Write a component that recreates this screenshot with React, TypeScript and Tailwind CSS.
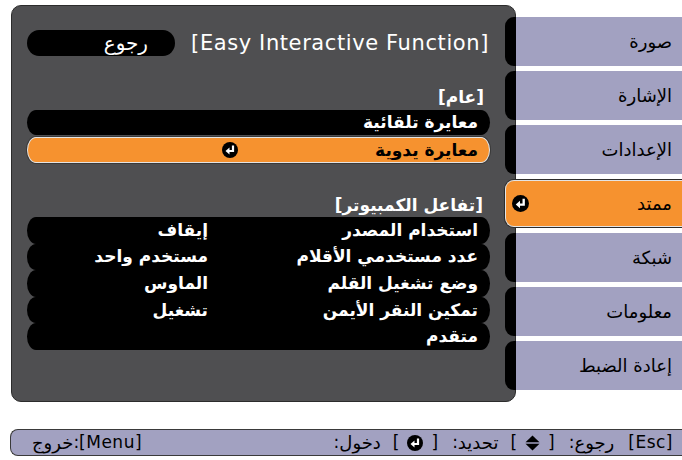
import React from "react";

const EnterIcon = ({ size = 16 }: { size?: number }) => (
  <svg width={size} height={size} viewBox="0 0 16 16" className="shrink-0">
    <circle cx="8" cy="8" r="8" fill="#000" />
    <path d="M11 3.5V9H6.5" stroke="#fff" strokeWidth="2.2" fill="none" />
    <path d="M7.5 5.5L3.5 9L7.5 12.5z" fill="#fff" />
  </svg>
);

const UpDownIcon = () => (
  <svg width="15" height="16" viewBox="0 0 15 16" className="shrink-0">
    <path d="M7.5 0.5L14.5 7.3H0.5z" fill="#000" />
    <path d="M0.5 8.7H14.5L7.5 15.5z" fill="#000" />
  </svg>
);

const rows: [string, string][] = [
  ["استخدام المصدر", "إيقاف"],
  ["عدد مستخدمي الأقلام", "مستخدم واحد"],
  ["وضع تشغيل القلم", "الماوس"],
  ["تمكين النقر الأيمن", "تشغيل"],
  ["متقدم", ""],
];

const tabs = ["صورة", "الإشارة", "الإعدادات", "ممتد", "شبكة", "معلومات", "إعادة الضبط"];

export default function App() {
  return (
    <div className="w-[682px] h-[460px] bg-white overflow-hidden font-['DejaVu_Sans','Liberation_Sans',sans-serif]">
      <div className="flex pt-[5px] pl-[11px] h-[402px]">
        {/* Main panel */}
        <div className="w-[505px] h-[397px] shrink-0 bg-[#4f4f51] rounded-[10px] border border-[#2c2c2c] flex flex-col pl-[15px] pr-[25px] pt-[24px]">
          {/* Header */}
          <div className="h-[26px] flex items-center justify-between">
            <div className="w-[148px] h-[26px] bg-black rounded-[12px/13px] flex items-center justify-end pr-[27px]">
              <span dir="rtl" className="text-white text-[20px] leading-none tracking-[3px]">رجوع</span>
            </div>
            <span className="text-white text-[21px] leading-none pr-[1px] tracking-[0.6px]">[Easy Interactive Function]</span>
          </div>

          <div className="h-[20px] mt-[31px] flex items-center justify-end pr-[6px]">
            <span dir="rtl" className="text-white text-[17px] font-bold leading-none">[عام]</span>
          </div>

          <div className="h-[25px] mt-[3px] bg-black rounded-[9px/12.5px] flex items-center justify-end pr-[12px]">
            <span dir="rtl" className="text-white text-[17px] font-bold leading-none">معايرة تلقائية</span>
          </div>

          <div className="h-[26px] mt-[2px] bg-[#f6922f] rounded-[9px/13px] border border-[#e4e4e4] shadow-[0_0_0_1px_#3a3a3a] flex items-center">
            <div className="w-[210px] flex justify-end">
              <EnterIcon />
            </div>
            <div className="flex-1 flex justify-end pr-[11px]">
              <span dir="rtl" className="text-black text-[17px] font-bold leading-none">معايرة يدوية</span>
            </div>
          </div>

          <div className="h-[20px] mt-[32px] flex items-center justify-end pr-[7px]">
            <span dir="rtl" className="text-white text-[17px] font-bold leading-none">[تفاعل الكمبيوتر]</span>
          </div>

          <div className="mt-[2px] flex flex-col">
            {rows.map(([label, value], i) => (
              <div key={i} className="h-[26.6px] bg-black rounded-[9px/13.3px] flex items-center">
                <div className="w-[181px] flex justify-end">
                  <span dir="rtl" className="text-white text-[17px] font-bold leading-none">{value}</span>
                </div>
                <div className="flex-1 flex justify-end pr-[12px]">
                  <span dir="rtl" className="text-white text-[17px] font-bold leading-none">{label}</span>
                </div>
              </div>
            ))}
          </div>
        </div>

        {/* Tabs */}
        <div className="ml-[-11px] w-[177px] shrink-0 pt-[12px] flex flex-col gap-[5px]">
          {tabs.map((t, i) =>
            i === 3 ? (
              <div key={i} className="h-[49px] py-[1px]">
                <div className="h-full bg-[#f6922f] rounded-l-[9px] border border-[#e4e4e4] border-r-0 shadow-[0_0_0_1px_#2c2c2c] flex items-center justify-between pl-[6px] pr-[10px]">
                  <EnterIcon size={17} />
                  <span dir="rtl" className="text-black text-[18px] leading-none">{t}</span>
                </div>
              </div>
            ) : (
              <div key={i} className="h-[49px] flex">
                <div className="w-[11px] bg-black rounded-l-[9px]" />
                <div className="flex-1 bg-[#a2a1c1] flex items-center justify-end pr-[10px]">
                  <span dir="rtl" className="text-black text-[18px] leading-none">{t}</span>
                </div>
              </div>
            )
          )}
        </div>
      </div>

      {/* Bottom bar */}
      <div className="mt-[27px] ml-[10px] h-[27px] bg-[#a2a1c1] border border-[#3a3a3a] border-r-0 rounded-l-[8px] flex items-center justify-between pl-[21px] pr-[9px] text-black text-[17px] leading-none">
        <div className="flex items-center">
          <span dir="rtl" className="text-[18px] tracking-[3px]">خروج</span>
          <span>:</span>
          <span className="tracking-[0.5px]">[Menu]</span>
        </div>
        <div className="flex items-center">
          <span>:</span>
          <span dir="rtl" className="text-[18px] tracking-[2px]">دخول</span>
          <span className="ml-[12px]">[</span>
          <span className="mx-[8px] flex"><EnterIcon size={16} /></span>
          <span>]</span>
          <span className="ml-[14px]">:</span>
          <span dir="rtl" className="text-[18px] tracking-[2px]">تحديد</span>
          <span className="ml-[12px]">[</span>
          <span className="mx-[8px] flex"><UpDownIcon /></span>
          <span>]</span>
          <span className="ml-[14px]">:</span>
          <span dir="rtl" className="text-[18px] tracking-[2px]">رجوع</span>
          <span className="ml-[14px] tracking-[0.5px]">[Esc]</span>
        </div>
      </div>
    </div>
  );
}
